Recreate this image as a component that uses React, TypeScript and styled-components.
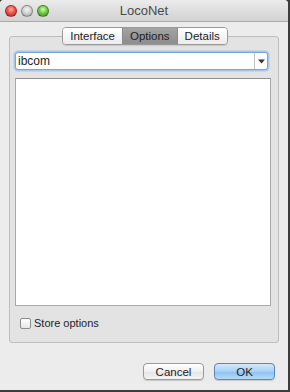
import styled, { createGlobalStyle } from "styled-components";

const Global = createGlobalStyle`
  html, body {
    margin: 0;
    padding: 0;
    background: #3c3c3c;
  }
  body {
    font-family: "Liberation Sans", Arial, sans-serif;
    color: #1e1e1e;
  }
`;

const tabs = ["Interface", "Options", "Details"];

const App = () => (
  <>
    <Global />
    <Window>
      <TitleBar>
        <Lights>
          <Light $color="red" />
          <Light $color="gray" />
          <Light $color="green" />
        </Lights>
        <Title>LocoNet</Title>
      </TitleBar>
      <Body>
        <TabBar>
          {tabs.map((t) => (
            <Tab key={t} $active={t === "Options"}>
              {t}
            </Tab>
          ))}
        </TabBar>
        <Panel>
          <Combo>
            <ComboText>ibcom</ComboText>
            <ComboArrow>
              <svg width="7" height="5" viewBox="0 0 7 5">
                <path d="M0 0.5 L7 0.5 L3.5 4.5 Z" fill="#333" />
              </svg>
            </ComboArrow>
          </Combo>
          <ListArea />
          <CheckRow>
            <CheckBox />
            <CheckLabel>Store options</CheckLabel>
          </CheckRow>
        </Panel>
        <Buttons>
          <Button>Cancel</Button>
          <Button $primary>OK</Button>
        </Buttons>
      </Body>
    </Window>
  </>
);

export default App;

const Window = styled.div`
  width: 288px;
  height: 390px;
  background: #ececec;
  border-radius: 4px 4px 0 0;
  overflow: hidden;
  display: flex;
  flex-direction: column;
`;

const TitleBar = styled.div`
  height: 22px;
  flex-shrink: 0;
  box-sizing: border-box;
  border-bottom: 1px solid #a9a9a9;
  background: linear-gradient(#ebebeb, #d2d2d2);
  display: flex;
  align-items: center;
  position: relative;
`;

const Lights = styled.div`
  display: flex;
  gap: 4px;
  padding-left: 5px;
`;

const lightColors: Record<string, string> = {
  red: "radial-gradient(circle at 50% 35%, #ffb3ad 0%, #f2544a 45%, #b8211a 100%)",
  gray: "radial-gradient(circle at 50% 35%, #f5f5f5 0%, #cfcfcf 50%, #9c9c9c 100%)",
  green: "radial-gradient(circle at 50% 35%, #d6f7b8 0%, #72cc45 45%, #3e8a1e 100%)",
};

const Light = styled.div<{ $color: string }>`
  width: 12px;
  height: 12px;
  border-radius: 50%;
  box-sizing: border-box;
  border: 1px solid rgba(0, 0, 0, 0.3);
  background: ${(p) => lightColors[p.$color]};
`;

const Title = styled.div`
  position: absolute;
  left: 0;
  right: 0;
  text-align: center;
  font-size: 13px;
  color: #4a4a4a;
  pointer-events: none;
`;

const Body = styled.div`
  flex: 1;
  padding: 5px 9px 0 9px;
  display: flex;
  flex-direction: column;
`;

const TabBar = styled.div`
  align-self: center;
  display: flex;
  margin-left: 2px;
  height: 16px;
  position: relative;
  z-index: 1;
  border: 1px solid #9a9a9a;
  border-radius: 4px;
  overflow: hidden;
  box-shadow: 0 1px 1px rgba(0, 0, 0, 0.12);
`;

const Tab = styled.div<{ $active?: boolean }>`
  display: flex;
  align-items: center;
  justify-content: center;
  padding: 0 7px;
  font-size: 11.5px;
  color: #1e1e1e;
  background: ${(p) =>
    p.$active
      ? "linear-gradient(#a3a3a3, #8d8d8d)"
      : "linear-gradient(#ffffff, #ececec)"};
  & + & {
    border-left: 1px solid #8a8a8a;
  }
`;

const Panel = styled.div`
  margin-top: -9px;
  height: 307px;
  box-sizing: border-box;
  border: 1px solid #bdbdbd;
  border-radius: 3px;
  background: #e3e3e3;
  padding: 15px 10px 0 5px;
  display: flex;
  flex-direction: column;
`;

const Combo = styled.div`
  height: 18px;
  width: 253px;
  box-sizing: border-box;
  border: 1px solid #79a6d8;
  border-radius: 3px;
  box-shadow: 0 0 0 1.5px #a7c8ec;
  background: #fff;
  display: flex;
  align-items: center;
`;

const ComboText = styled.div`
  flex: 1;
  font-size: 12px;
  padding-left: 2px;
`;

const ComboArrow = styled.div`
  width: 12px;
  height: 100%;
  border-left: 1px solid #c4c4c4;
  display: flex;
  align-items: center;
  justify-content: center;
`;

const ListArea = styled.div`
  margin-top: 8px;
  width: 256px;
  height: 228px;
  box-sizing: border-box;
  background: #fff;
  border: 1px solid #a9a9a9;
  border-top-color: #8f8f8f;
`;

const CheckRow = styled.div`
  display: flex;
  align-items: center;
  gap: 3px;
  padding-left: 5px;
  margin-top: 11px;
`;

const CheckBox = styled.div`
  width: 11px;
  height: 11px;
  box-sizing: border-box;
  border: 1px solid #8c8c8c;
  border-radius: 2px;
  background: linear-gradient(#ffffff, #e6e6e6);
`;

const CheckLabel = styled.div`
  font-size: 11px;
  color: #1e1e1e;
`;

const Buttons = styled.div`
  display: flex;
  justify-content: flex-end;
  gap: 10px;
  padding-right: 4px;
  margin-top: 20px;
`;

const Button = styled.div<{ $primary?: boolean }>`
  width: 61px;
  height: 17px;
  box-sizing: border-box;
  border-radius: 4px;
  border: 1px solid ${(p) => (p.$primary ? "#5f86b8" : "#9b9b9b")};
  background: ${(p) =>
    p.$primary
      ? "linear-gradient(#d4e9fc, #a6d0f5 50%, #8cc0ef 51%, #b4dcfa)"
      : "linear-gradient(#ffffff, #f0f0f0 50%, #e4e4e4 51%, #f4f4f4)"};
  box-shadow: 0 1px 1px rgba(0, 0, 0, 0.15);
  display: flex;
  align-items: center;
  justify-content: center;
  font-size: 11.5px;
  color: #1e1e1e;
`;
